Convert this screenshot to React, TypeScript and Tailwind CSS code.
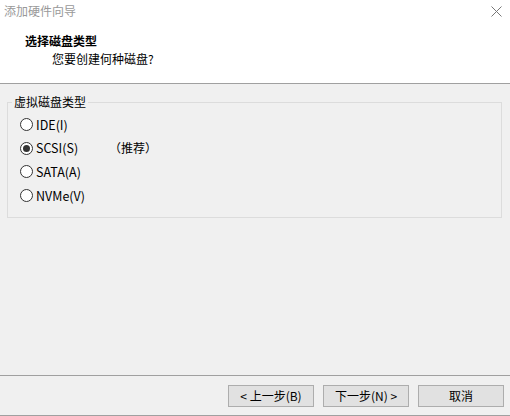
import React, { useState } from 'react';

const options = [
  { id: 'ide', label: 'IDE(I)' },
  { id: 'scsi', label: 'SCSI(S)', note: '（推荐）' },
  { id: 'sata', label: 'SATA(A)' },
  { id: 'nvme', label: 'NVMe(V)' },
];

function Radio({ checked }: { checked: boolean }) {
  return (
    <span className="w-[13px] h-[13px] rounded-full border border-[#333] bg-white flex items-center justify-center shrink-0">
      {checked && <span className="w-[7px] h-[7px] rounded-full bg-[#333]" />}
    </span>
  );
}

export default function App() {
  const [selected, setSelected] = useState('scsi');

  return (
    <div
      className="w-[510px] h-[416px] flex flex-col bg-[#f0f0f0] text-[12px] text-black overflow-hidden"
      style={{ fontFamily: '"Noto Sans CJK SC", "Noto Sans", sans-serif' }}
    >
      {/* header */}
      <div className="h-[84px] bg-white border-b border-[#a0a0a0] flex flex-col shrink-0">
        <div className="h-[22px] flex items-center justify-between pl-[4px] pr-[8px]">
          <span className="text-[#999] leading-[16px]">添加硬件向导</span>
          <svg width="11" height="11" viewBox="0 0 11 11" className="mt-[1px]">
            <path d="M0.5 0.5 L10.5 10.5 M10.5 0.5 L0.5 10.5" stroke="#777" strokeWidth="1" fill="none" />
          </svg>
        </div>
        <div className="pl-[25px] pt-[12px] font-bold leading-[14px]">选择磁盘类型</div>
        <div className="pl-[52px] pt-[4px] leading-[14px]">您要创建何种磁盘?</div>
      </div>

      {/* body */}
      <div className="flex-1 pt-[10px] pl-[7px] pr-[8px]">
        <fieldset className="border border-[#dcdcdc] px-[4px] h-[124px]">
          <legend className="px-[2px] leading-[16px]">虚拟磁盘类型</legend>
          <div className="flex flex-col pl-[8px] pt-[3px]">
            {options.map(o => (
              <button
                key={o.id}
                type="button"
                onClick={() => setSelected(o.id)}
                className="h-[23.6px] flex items-center gap-[3px] text-left"
              >
                <Radio checked={selected === o.id} />
                <span className="w-[70px] leading-[16px] text-[12.5px]">{o.label}</span>
                {o.note && <span className="leading-[16px]">{o.note}</span>}
              </button>
            ))}
          </div>
        </fieldset>
      </div>

      {/* footer */}
      <div className="h-[41px] border-t border-[#a0a0a0] shrink-0 flex flex-col">
        <div className="flex-1 flex justify-end items-start pt-[9px] pr-[6px] gap-[9px]">
          <button type="button" className="w-[86px] h-[22px] bg-[#e1e1e1] border border-[#adadad] leading-[16px]">
            &lt; 上一步(B)
          </button>
          <button type="button" className="w-[86px] h-[22px] bg-[#e1e1e1] border border-[#adadad] leading-[16px]">
            下一步(N) &gt;
          </button>
          <button type="button" className="w-[86px] h-[22px] bg-[#e1e1e1] border border-[#adadad] leading-[16px]">
            取消
          </button>
        </div>
        <div className="h-[1px] bg-[#a0a0a0]" />
      </div>
    </div>
  );
}
